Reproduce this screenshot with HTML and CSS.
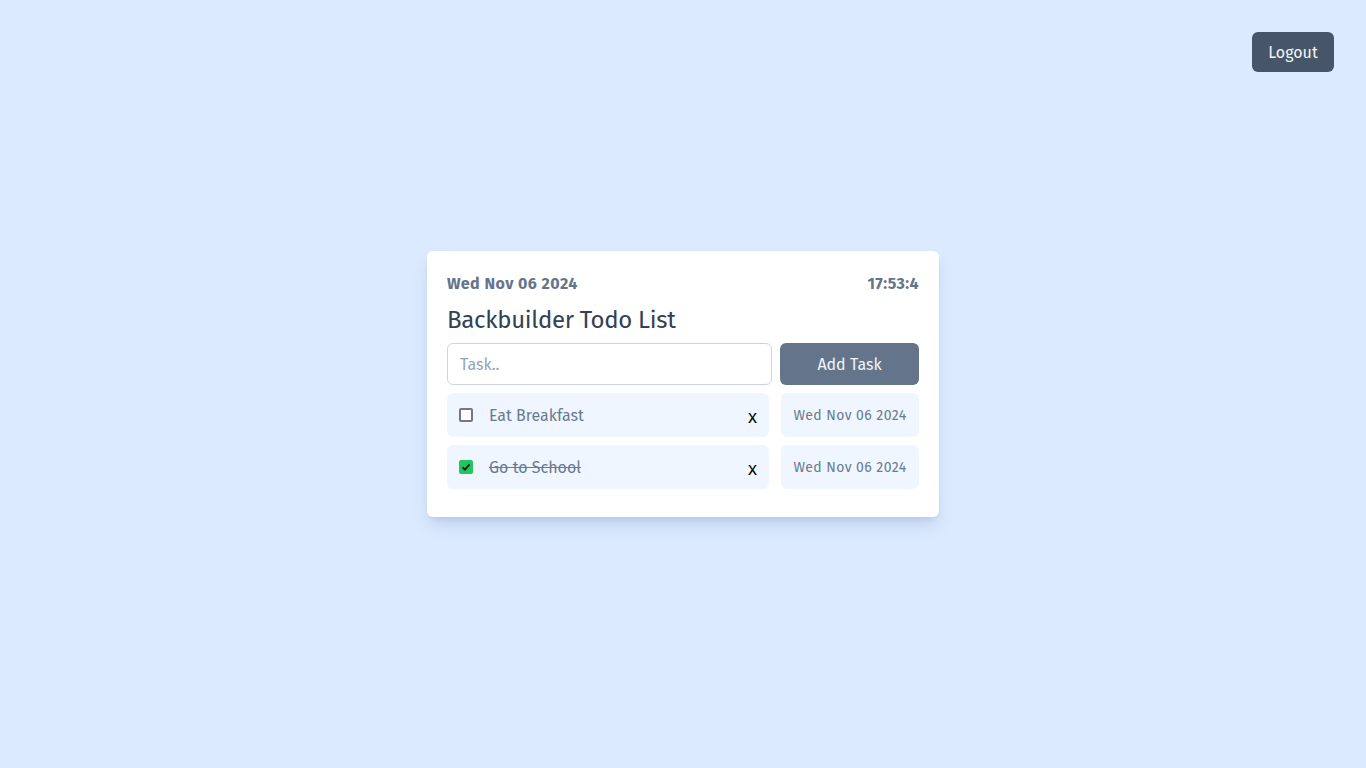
FILE: index.html
```html
<!DOCTYPE html>
<html>
<head>
<meta charset="utf-8">
<link rel="stylesheet" href="styles.css">
</head>
<body>
<div class="page">
  <button class="logout">Logout</button>
  <div class="card">
    <div class="head">
      <span>Wed Nov 06 2024</span>
      <span>17:53:4</span>
    </div>
    <h1 class="title">Backbuilder Todo List</h1>
    <div class="add">
      <input class="task-input" type="text" placeholder="Task..">
      <button class="add-btn">Add Task</button>
    </div>
    <div class="list">
      <div class="row">
        <div class="item">
          <span class="box"></span>
          <span class="label">Eat Breakfast</span>
          <button class="del">x</button>
        </div>
        <div class="date">Wed Nov 06 2024</div>
      </div>
      <div class="row">
        <div class="item">
          <span class="box checked"><svg viewBox="0 0 14 14" width="14" height="14"><path d="M3.5 7.2 L6 9.6 L10.6 4.4" fill="none" stroke="#0b2a14" stroke-width="2"/></svg></span>
          <span class="label done">Go to School</span>
          <button class="del">x</button>
        </div>
        <div class="date">Wed Nov 06 2024</div>
      </div>
    </div>
  </div>
</div>
</body>
</html>
```
FILE: styles.css
```css
* { box-sizing: border-box; }
html, body { margin: 0; height: 100%; }
body {
  background: #dbeafe;
  font-family: "Fira Sans", "Open Sans", "Noto Sans", sans-serif;
  color: #64748b;
}
.page {
  display: grid;
  height: 100vh;
  place-items: center;
}
.logout {
  grid-area: 1 / 1;
  justify-self: end;
  align-self: start;
  margin: 32px 32px 0 0;
  width: 82px;
  height: 40px;
  border: 0;
  border-radius: 6px;
  background: #475569;
  color: #f1f5f9;
  font: inherit;
  font-size: 16px;
}
.card {
  grid-area: 1 / 1;
  width: 512px;
  height: 266px;
  background: #fff;
  border-radius: 6px;
  padding: 21px 20px 28px;
  box-shadow: 0 10px 15px -3px rgba(100,130,180,.25), 0 4px 6px -4px rgba(100,130,180,.2);
}
.head {
  display: flex;
  justify-content: space-between;
  font-weight: 700;
  font-size: 16px;
  letter-spacing: 0.45px;
  line-height: 24px;
  height: 24px;
}
.title {
  margin: 8px 0 0;
  font-size: 24px;
  letter-spacing: -0.3px;
  line-height: 32px;
  font-weight: 400;
  color: #334155;
}
.add {
  display: flex;
  gap: 8px;
  margin-top: 7px;
}
.task-input {
  flex: 1;
  height: 42px;
  border: 1px solid #cbd5e1;
  border-radius: 6px;
  padding: 0 12px;
  font: inherit;
  font-size: 16px;
  color: #334155;
}
.task-input::placeholder { color: #94a3b8; }
.add-btn {
  width: 139px;
  height: 42px;
  border: 0;
  border-radius: 6px;
  background: #64748b;
  color: #f1f5f9;
  font: inherit;
  font-size: 16px;
}
.list {
  display: flex;
  flex-direction: column;
  gap: 8px;
  margin-top: 8px;
}
.row {
  display: flex;
  gap: 12px;
}
.item {
  flex: 1;
  height: 44px;
  background: #eff6ff;
  border-radius: 6px;
  display: flex;
  align-items: center;
  padding: 0 12px;
}
.box {
  width: 14px;
  height: 14px;
  border: 2px solid #767682;
  border-radius: 2px;
  background: #fff;
  display: flex;
  flex: none;
}
.box.checked {
  border: 0;
  background: #22c55e;
}
.label {
  margin-left: 16px;
  font-size: 16px;
  flex: 1;
  color: #6b7a90;
}
.label.done { text-decoration: line-through; }
.del {
  border: 0;
  background: none;
  padding: 0;
  color: #000;
  font-family: "Liberation Sans", Arial, sans-serif;
  font-size: 18px;
  margin-top: 4px;
  margin-right: 0;
}
.date {
  width: 138px;
  height: 44px;
  background: #eff6ff;
  border-radius: 6px;
  display: flex;
  align-items: center;
  justify-content: center;
  font-size: 14px;
  letter-spacing: 0.4px;
  color: #6b7a90;
}
```
